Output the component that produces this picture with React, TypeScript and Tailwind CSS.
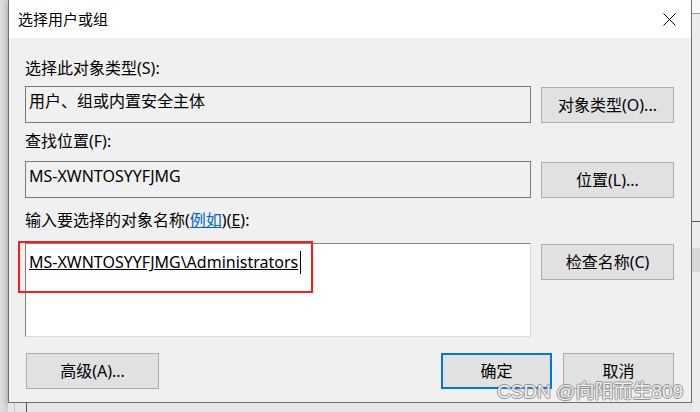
const font = "font-['Segoe_UI','Noto_Sans','Noto_Sans_CJK_SC',sans-serif]";

function Btn({ label, wide = true, primary = false }: { label: React.ReactNode; wide?: boolean; primary?: boolean }) {
  return (
    <button
      className={`${wide ? "w-[133px]" : "w-[111px]"} h-[36px] shrink-0 bg-[#e1e1e1] text-[16px] text-black flex items-center justify-center ${
        primary ? "border-2 border-[#0078d7]" : "border border-[#adadad]"
      }`}
    >
      {label}
    </button>
  );
}

function Field({ text }: { text: string }) {
  return (
    <div className="w-[506px] h-[37px] shrink-0 border border-[#7a7a7a] bg-[#f0f0f0] pl-[3px] pt-[3px] text-[16px] leading-[22px] text-black">
      {text}
    </div>
  );
}

export default function App() {
  return (
    <div className={`w-[700px] h-[412px] overflow-hidden flex bg-[#e4e4e4] relative ${font}`}>
      {/* background window edge, left */}
      <div className="w-[8px] h-full bg-gradient-to-r from-[#dedede] to-[#d2d2d2]" />

      <div className="w-[684px] flex flex-col">
        {/* dialog */}
        <div className="h-[403px] flex flex-col border-l border-r border-b border-[#6e6e6e] shadow-[0_2px_6px_rgba(0,0,0,0.25)]">
          <div className="h-[38px] shrink-0 bg-white flex items-center justify-between pl-[9px] pr-[14px]">
            <span className="text-[15px] text-black">选择用户或组</span>
            <svg width="13" height="13" viewBox="0 0 13 13" className="mr-[1px]">
              <path d="M0.5 0.5 L12.5 12.5 M12.5 0.5 L0.5 12.5" stroke="#000" strokeWidth="1" />
            </svg>
          </div>

          <div className="flex-1 bg-[#f0f0f0] pl-[16px] pr-[17px] text-[16px] text-black">
            <div className="mt-[20px] h-[20px] leading-[20px]">选择此对象类型(S):</div>
            <div className="mt-[8px] flex gap-[10px] items-start">
              <Field text="用户、组或内置安全主体" />
              <div className="mt-[1px]">
                <Btn label="对象类型(O)..." />
              </div>
            </div>

            <div className="mt-[8px] h-[20px] leading-[20px]">查找位置(F):</div>
            <div className="mt-[10px] flex gap-[10px] items-start">
              <Field text="MS-XWNTOSYYFJMG" />
              <div className="mt-[1px]">
                <Btn label="位置(L)..." />
              </div>
            </div>

            <div className="mt-[12px] h-[20px] leading-[20px]">
              输入要选择的对象名称(<span className="text-[#0066cc] underline">例如</span>)(<span className="underline">E</span>):
            </div>
            <div className="mt-[13px] flex gap-[10px] items-start">
              <div className="w-[506px] h-[94px] shrink-0 bg-white border-t border-l border-t-[#828282] border-l-[#828282] border-b border-r border-b-[#dcdcdc] border-r-[#dcdcdc] pl-[3px] pt-[7px] leading-[22px]">
                <span className="underline">MS-XWNTOSYYFJMG\Administrators</span>
                <span className="inline-block w-px h-[23px] bg-black align-middle ml-[2px] -mt-[2px]" />
              </div>
              <div className="mt-[1px]">
                <Btn label="检查名称(C)" />
              </div>
            </div>

            <div className="mt-[16px] flex items-center">
              <div className="ml-[1px]">
                <Btn label="高级(A)..." />
              </div>
              <div className="ml-auto flex gap-[11px]">
                <Btn label="确定" wide={false} primary />
                <Btn label="取消" wide={false} />
              </div>
            </div>
          </div>
        </div>

        {/* background windows below the dialog */}
        <div className="flex-1 flex bg-[#e6e6e6]">
          <div className="ml-[6px] w-px bg-[#c4c4c4]" />
          <div className="ml-[11px] w-px bg-[#555]" />
        </div>
      </div>

      {/* background window edge, right */}
      <div className="w-[8px] flex flex-col">
        <div className="h-[13px] bg-[#f7f7f7]" />
        <div className="h-px bg-[#9a9a9a]" />
        <div className="h-[207px] bg-[#ececec]" />
        <div className="h-px bg-[#555]" />
        <div className="h-[26px] bg-[#ececec]" />
        <div className="h-[24px] bg-[#d8d8d8]" />
        <div className="flex-1 bg-[#ececec]" />
      </div>

      {/* red annotation around the entered name */}
      <div className="absolute left-[18px] top-[241px] w-[295px] h-[52px] border-2 border-[#ff1a1a]" />

      {/* watermark */}
      <div className="absolute left-[497px] top-[380px] text-[19px] leading-[24px] text-[#f2f2f2] [text-shadow:-1px_0_#8a8a8a,1px_0_#8a8a8a,0_-1px_#8a8a8a,0_1px_#8a8a8a] opacity-90 font-['Liberation_Sans','Noto_Sans_CJK_SC',sans-serif]">
        CSDN @向阳而生809
      </div>
    </div>
  );
}
